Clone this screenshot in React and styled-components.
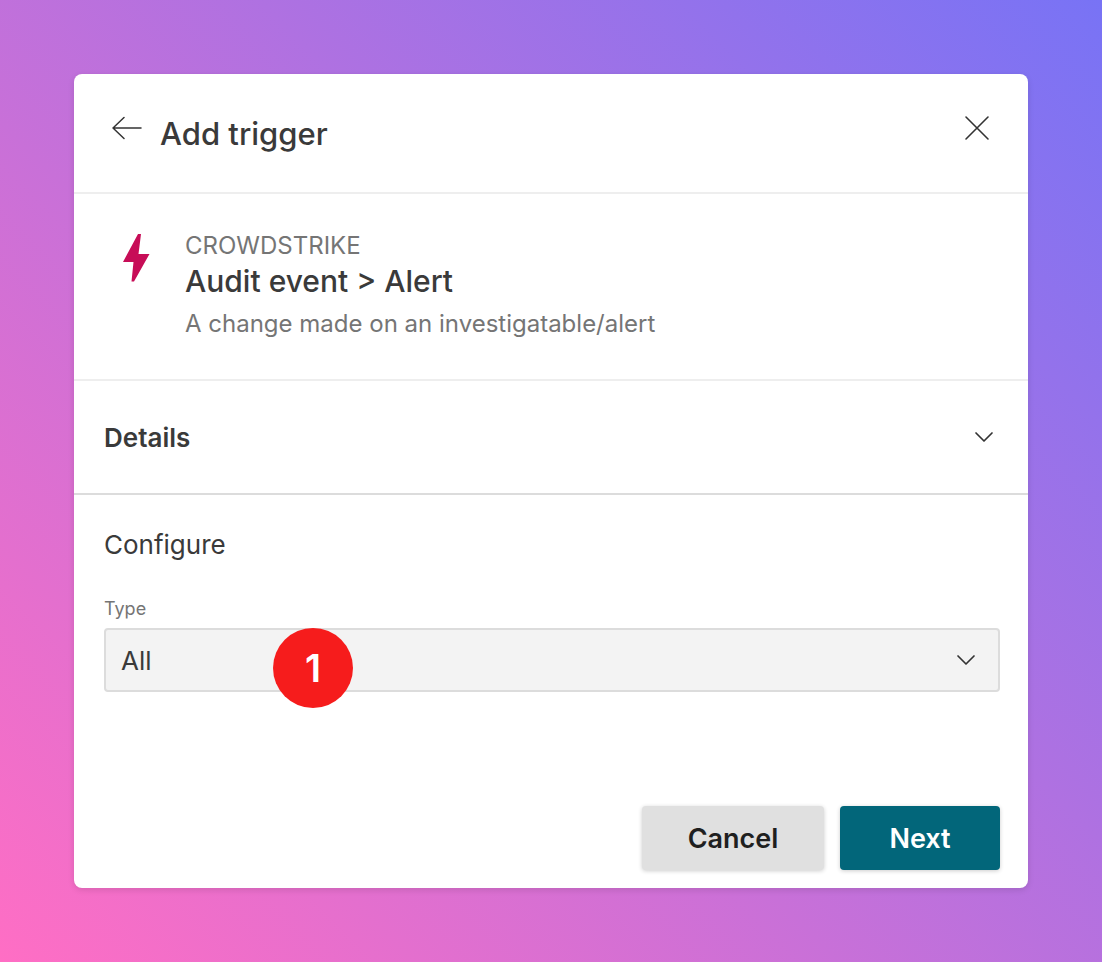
import styled, { createGlobalStyle } from 'styled-components';

const GlobalStyle = createGlobalStyle`
  html, body { margin: 0; padding: 0; }
  body { font-family: "Inter", "Noto Sans", sans-serif; }
  * { box-sizing: border-box; }
`;

function App() {
  return (
    <Page>
      <GlobalStyle />
      <Card>
        <Header>
          <HeaderLeft>
            <IconButton aria-label="Back">
              <svg width="30" height="24" viewBox="0 0 30 24" fill="none" stroke="#333" strokeWidth="1.5" strokeLinecap="round" strokeLinejoin="round">
                <path d="M1 12H29M12 1.5L1 12L12 22.5" />
              </svg>
            </IconButton>
            <Title>Add trigger</Title>
          </HeaderLeft>
          <IconButton aria-label="Close">
            <svg width="26" height="26" viewBox="0 0 26 26" fill="none" stroke="#333" strokeWidth="1.6" strokeLinecap="round">
              <path d="M2 2L24 24M24 2L2 24" />
            </svg>
          </IconButton>
        </Header>
        <Trigger>
          <Bolt viewBox="0 0 27 48">
            <polygon fill="#c70d57" points="15,0 18,0 15.5,20 26.5,20 11,47.5 8.5,47.5 10.5,28 0,28" />
          </Bolt>
          <TriggerText>
            <Vendor>CROWDSTRIKE</Vendor>
            <TriggerName>Audit event &gt; Alert</TriggerName>
            <TriggerDesc>A change made on an investigatable/alert</TriggerDesc>
          </TriggerText>
        </Trigger>
        <Details>
          <DetailsLabel>Details</DetailsLabel>
          <Chevron />
        </Details>
        <Configure>
          <SectionTitle>Configure</SectionTitle>
          <FieldLabel>Type</FieldLabel>
          <SelectBox>
            <SelectValue>All</SelectValue>
            <Chevron />
            <StepBadge>1</StepBadge>
          </SelectBox>
        </Configure>
        <Footer>
          <Button>Cancel</Button>
          <Button primary>Next</Button>
        </Footer>
      </Card>
    </Page>
  );
}

function Chevron() {
  return (
    <svg width="20" height="12" viewBox="0 0 20 12" fill="none" stroke="#333" strokeWidth="1.7" strokeLinecap="round" strokeLinejoin="round">
      <path d="M2 2L10 10L18 2" />
    </svg>
  );
}

export default App;

const Page = styled.div`
  width: 1102px;
  height: 962px;
  padding: 74px;
  background: linear-gradient(45deg, #ff6ec4 0%, #7873f5 100%);
`;

const Card = styled.div`
  width: 954px;
  height: 814px;
  display: flex;
  flex-direction: column;
  background: #fff;
  border-radius: 8px;
  box-shadow: 0 2px 6px rgba(0, 0, 0, 0.12);
`;

const Header = styled.div`
  height: 120px;
  flex: none;
  display: flex;
  align-items: center;
  justify-content: space-between;
  padding: 0 38px;
  border-bottom: 2px solid #eeeeee;
`;

const HeaderLeft = styled.div`
  display: flex;
  align-items: center;
  gap: 18px;
`;

const IconButton = styled.div`
  display: flex;
  align-items: center;
  justify-content: center;
  margin-top: -10px;
`;

const Title = styled.h1`
  margin: 0;
  font-size: 31px;
  font-weight: 500;
  color: #3a3a3a;
`;

const Trigger = styled.div`
  height: 187px;
  flex: none;
  display: flex;
  padding: 38px 0 0 49px;
  border-bottom: 2px solid #eeeeee;
`;

const Bolt = styled.svg`
  width: 27px;
  height: 48px;
  margin-top: 2px;
  margin-right: 35px;
  flex: none;
`;

const TriggerText = styled.div`
  display: flex;
  flex-direction: column;
`;

const Vendor = styled.div`
  font-size: 24px;
  line-height: 28px;
  color: #757575;
`;

const TriggerName = styled.div`
  font-size: 30px;
  line-height: 42px;
  font-weight: 500;
  color: #3a3a3a;
`;

const TriggerDesc = styled.div`
  font-size: 24px;
  line-height: 44px;
  color: #757575;
`;

const Details = styled.div`
  height: 114px;
  flex: none;
  display: flex;
  align-items: center;
  justify-content: space-between;
  padding: 0 34px 0 30px;
  border-bottom: 2px solid #dcdcdc;
`;

const DetailsLabel = styled.div`
  font-size: 26px;
  font-weight: 600;
  color: #3a3a3a;
`;

const Configure = styled.div`
  flex: 1;
  padding: 32px 28px 0 30px;
`;

const SectionTitle = styled.div`
  font-size: 26px;
  line-height: 36px;
  color: #3a3a3a;
`;

const FieldLabel = styled.div`
  margin-top: 34px;
  font-size: 18px;
  line-height: 24px;
  color: #757575;
`;

const SelectBox = styled.div`
  position: relative;
  margin-top: 7px;
  height: 64px;
  display: flex;
  align-items: center;
  justify-content: space-between;
  padding: 0 22px 0 15px;
  background: #f3f3f3;
  border: 2px solid #dcdcdc;
  border-radius: 4px;
`;

const SelectValue = styled.div`
  font-size: 26px;
  color: #3a3a3a;
`;

const StepBadge = styled.div`
  position: absolute;
  left: 167px;
  top: -2px;
  width: 80px;
  height: 80px;
  display: flex;
  align-items: center;
  justify-content: center;
  border-radius: 50%;
  background: #f61c1c;
  color: #fff;
  font-size: 38px;
  font-weight: 600;
`;

const Footer = styled.div`
  flex: none;
  display: flex;
  justify-content: flex-end;
  gap: 16px;
  padding: 0 28px 18px 0;
`;

const Button = styled.button`
  height: 64px;
  width: ${props => (props.primary ? '160px' : '182px')};
  border: none;
  border-radius: 4px;
  font-family: inherit;
  font-size: 27px;
  font-weight: 600;
  color: ${props => (props.primary ? '#fff' : '#1f1f1f')};
  background: ${props => (props.primary ? '#02667a' : '#e0e0e0')};
  box-shadow: 0 1px 4px rgba(0, 0, 0, 0.2);
`;
